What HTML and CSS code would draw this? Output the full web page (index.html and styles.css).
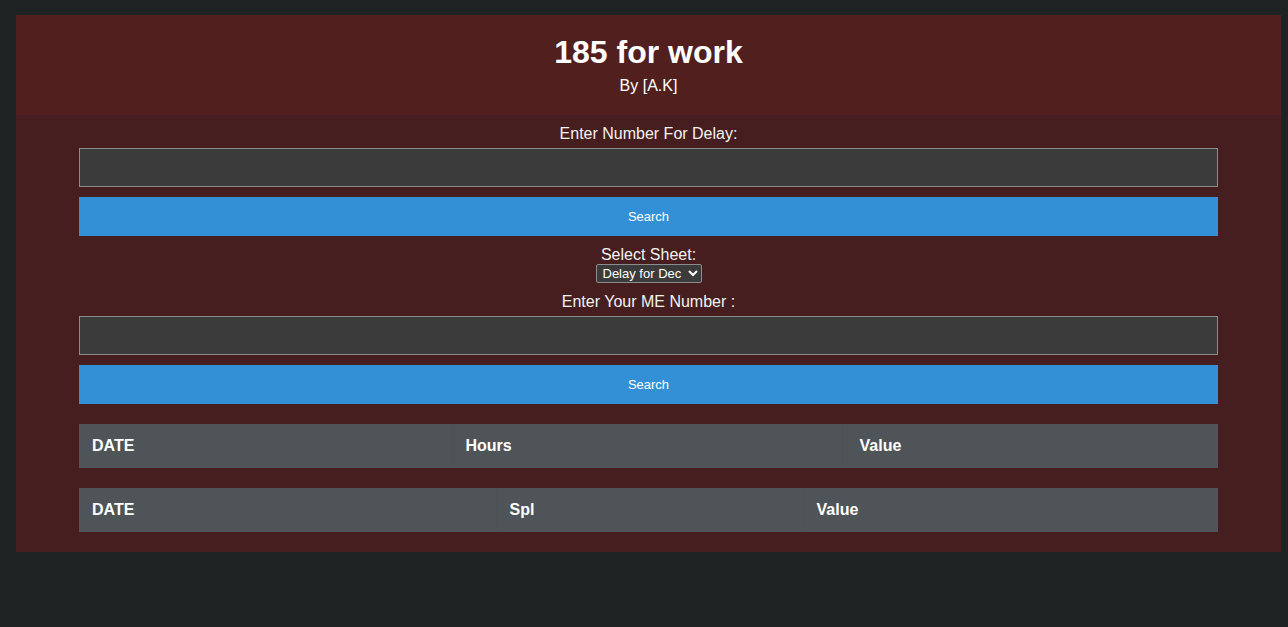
FILE: index.html
```html
<!DOCTYPE html>
<html lang="en">
<head>
<meta charset="utf-8">
<title>185 for work</title>
<link rel="stylesheet" href="styles.css">
</head>
<body>
<div class="app">
  <header class="hero">
    <h1 class="title">185 for work</h1>
    <p class="byline">By [A.K]</p>
  </header>
  <main class="panel">
    <div class="form">
      <label class="label" for="delay">Enter Number For Delay:</label>
      <input class="field" id="delay" type="text">
      <button class="btn" type="button">Search</button>

      <label class="label label-gap label-tight" for="sheet">Select Sheet:</label>
      <div class="select-row">
        <select class="sheet" id="sheet">
          <option>Delay for Dec</option>
        </select>
      </div>

      <label class="label label-gap" for="me">Enter Your ME Number :</label>
      <input class="field" id="me" type="text">
      <button class="btn" type="button">Search</button>

      <table class="grid grid-hours">
        <colgroup>
          <col class="c-h1"><col class="c-h2"><col class="c-h3">
        </colgroup>
        <thead>
          <tr><th>DATE</th><th>Hours</th><th>Value</th></tr>
        </thead>
      </table>

      <table class="grid grid-spl">
        <colgroup>
          <col class="c-s1"><col class="c-s2"><col class="c-s3">
        </colgroup>
        <thead>
          <tr><th>DATE</th><th>Spl</th><th>Value</th></tr>
        </thead>
      </table>
    </div>
  </main>
</div>
</body>
</html>
```

FILE: styles.css
```css
html, body {
  margin: 0;
  padding: 0;
  background: #1f2223;
}

body {
  font-family: "Liberation Sans", Arial, sans-serif;
  color: #ffffff;
  padding: 15px 7px 0 16px;
  min-height: 627px;
  box-sizing: border-box;
}

.app {
  width: 1265px;
}

.hero {
  background: #521f1f;
  text-align: center;
  padding: 19px 0 20px;
}

.title {
  margin: 0 0 6px;
  font-size: 32px;
  font-weight: bold;
  line-height: 37px;
}

.byline {
  margin: 0;
  font-size: 16px;
  line-height: 18px;
}

.panel {
  background: #461e1f;
  padding: 10px 0 20px;
}

.form {
  width: 1139px;
  margin: 0 auto;
  display: flex;
  flex-direction: column;
  align-items: stretch;
}

.label {
  display: block;
  text-align: center;
  font-size: 16px;
  line-height: 18px;
  color: #f2f2f2;
  margin-bottom: 5px;
}

.label-gap {
  margin-top: 10px;
}

.label-tight {
  margin-bottom: 0;
}

.field {
  box-sizing: border-box;
  height: 39px;
  width: 100%;
  margin: 0 0 10px;
  background: #3b3b3b;
  border: 1px solid #8c8c8c;
  color: #ffffff;
  font-size: 14px;
  padding: 0 8px;
}

.btn {
  box-sizing: border-box;
  height: 39px;
  width: 100%;
  margin: 0;
  border: none;
  background: #3390d6;
  color: #ffffff;
  font-family: "Liberation Sans", Arial, sans-serif;
  font-size: 13px;
}

.select-row {
  display: flex;
  justify-content: center;
}

.sheet {
  color-scheme: dark;
  box-sizing: border-box;
  height: 19px;
  width: 106px;
  background: #3b3b3b;
  color: #ffffff;
  border: 1px solid #8c8c8c;
  border-radius: 2px;
  font-family: "Liberation Sans", Arial, sans-serif;
  font-size: 13px;
  padding: 0 0 0 2px;
}

.grid {
  width: 100%;
  margin-top: 20px;
  border-collapse: collapse;
  table-layout: fixed;
  background: #4f5458;
}

.grid th {
  text-align: left;
  font-size: 16px;
  font-weight: bold;
  line-height: 18px;
  padding: 13px 13px;
  color: #ffffff;
}

.grid th + th {
  padding-left: 12px;
  border-left: 1px solid #4c5155;
}

.c-h1 { width: 374px; }
.c-h2 { width: 394px; }
.c-h3 { width: 371px; }

.c-s1 { width: 418px; }
.c-s2 { width: 307px; }
.c-s3 { width: 414px; }
```
